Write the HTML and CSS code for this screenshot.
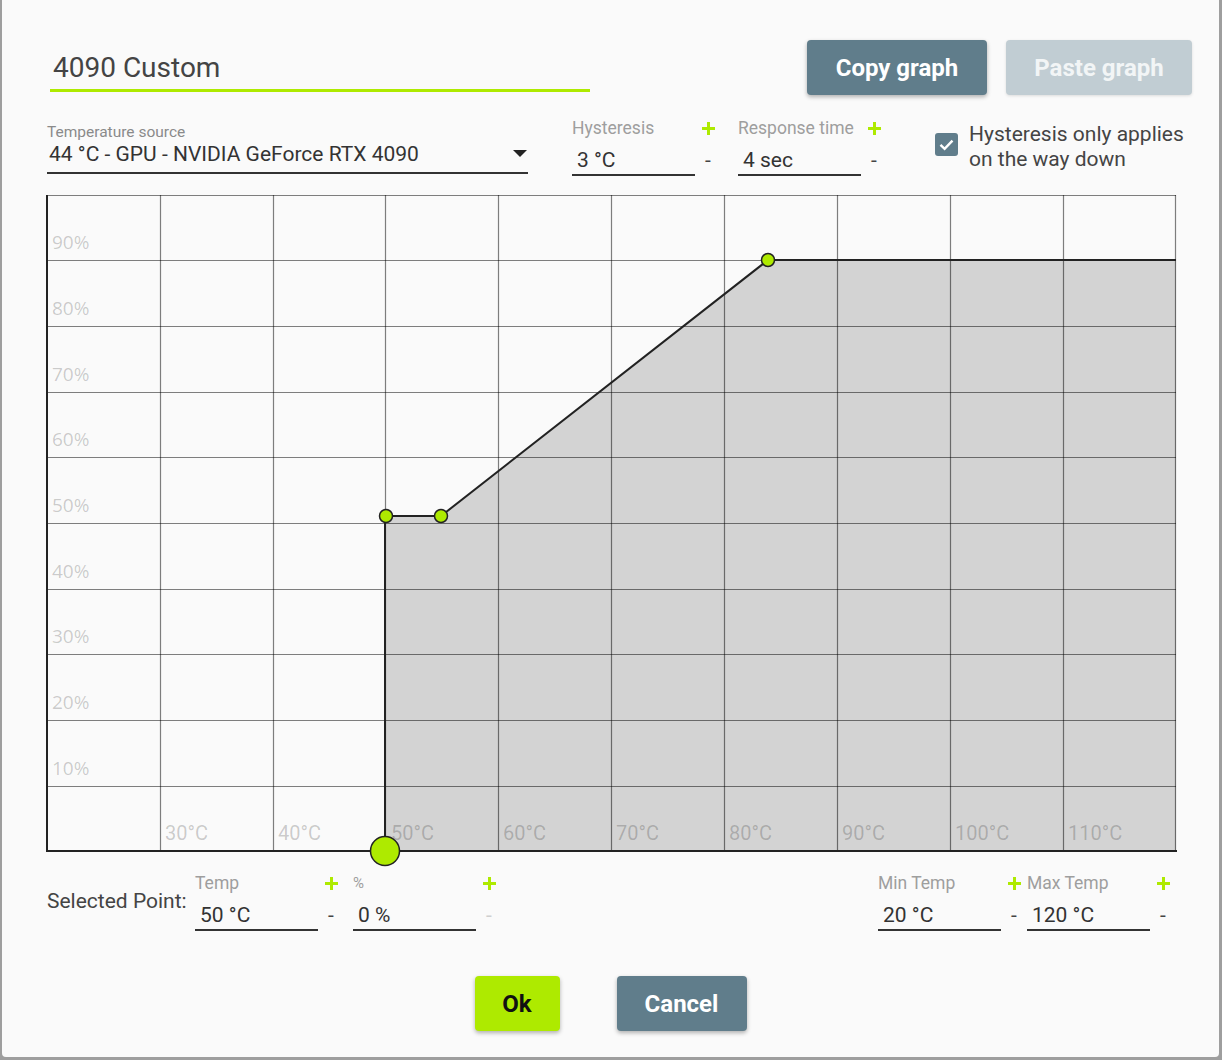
FILE: index.html
```html
<!DOCTYPE html>
<html>

<link rel="stylesheet" href="styles.css">

<head>
    <meta charset="utf-8">
    <title>Fan curve</title>
    <meta name="viewport" content="width=device-width, initial-scale=1">
</head>

<body>
    <div class="dialog">
        <div class="header">
            <div class="title">4090 Custom</div>
            <div class="header-actions">
                <button class="btn btn-slate btn-copy">Copy graph</button>
                <button class="btn btn-disabled btn-paste">Paste graph</button>
            </div>
        </div>

        <div class="settings">
            <div class="select-field">
                <div class="select-label">Temperature source</div>
                <div class="select-value">
                    <span>44 °C - GPU - NVIDIA GeForce RTX 4090</span>
                    <span class="caret"></span>
                </div>
            </div>

            <div class="numfield hysteresis">
                <span class="nf-label">Hysteresis</span>
                <span class="nf-btn"><svg class="plus" viewBox="0 0 13 13"><rect x="5" y="0" width="3" height="13"/><rect x="0" y="5" width="13" height="3"/></svg></span>
                <span class="nf-value">3 °C</span>
                <span class="nf-btn minus">-</span>
            </div>

            <div class="numfield response">
                <span class="nf-label">Response time</span>
                <span class="nf-btn"><svg class="plus" viewBox="0 0 13 13"><rect x="5" y="0" width="3" height="13"/><rect x="0" y="5" width="13" height="3"/></svg></span>
                <span class="nf-value">4 sec</span>
                <span class="nf-btn minus">-</span>
            </div>

            <div class="check">
                <span class="check-box">
                    <svg viewBox="0 0 23 23"><path d="M5.5 11.8 L9.6 15.8 L17.5 7.6" fill="none" stroke="#fff" stroke-width="2.4"/></svg>
                </span>
                <span class="check-text">Hysteresis only applies<br>on the way down</span>
            </div>
        </div>

        <div class="graph">
            <svg class="chart" viewBox="46 195 1131 657" width="1131" height="657">
                <rect x="47" y="195" width="1129" height="656" fill="#fafafa"/>
                <polygon points="385,851 385,516 441,516 768,260 1176,260 1176,851" fill="#d3d3d3"/>
                <g stroke="rgba(0,0,0,0.5)" stroke-width="1.2">
                    <line x1="160.5" y1="195" x2="160.5" y2="851"/>
                    <line x1="273.5" y1="195" x2="273.5" y2="851"/>
                    <line x1="385.5" y1="195" x2="385.5" y2="851"/>
                    <line x1="498.5" y1="195" x2="498.5" y2="851"/>
                    <line x1="611.5" y1="195" x2="611.5" y2="851"/>
                    <line x1="724.5" y1="195" x2="724.5" y2="851"/>
                    <line x1="837.5" y1="195" x2="837.5" y2="851"/>
                    <line x1="950.5" y1="195" x2="950.5" y2="851"/>
                    <line x1="1063.5" y1="195" x2="1063.5" y2="851"/>
                    <line x1="1175.5" y1="195" x2="1175.5" y2="851"/>
                    <line x1="47" y1="195.5" x2="1176" y2="195.5"/>
                    <line x1="47" y1="260.5" x2="1176" y2="260.5"/>
                    <line x1="47" y1="326.5" x2="1176" y2="326.5"/>
                    <line x1="47" y1="392.5" x2="1176" y2="392.5"/>
                    <line x1="47" y1="457.5" x2="1176" y2="457.5"/>
                    <line x1="47" y1="523.5" x2="1176" y2="523.5"/>
                    <line x1="47" y1="589.5" x2="1176" y2="589.5"/>
                    <line x1="47" y1="654.5" x2="1176" y2="654.5"/>
                    <line x1="47" y1="720.5" x2="1176" y2="720.5"/>
                    <line x1="47" y1="786.5" x2="1176" y2="786.5"/>
                </g>
                <g class="pct-labels">
                    <text x="52" y="249">90%</text>
                    <text x="52" y="315">80%</text>
                    <text x="52" y="381">70%</text>
                    <text x="52" y="446">60%</text>
                    <text x="52" y="512">50%</text>
                    <text x="52" y="578">40%</text>
                    <text x="52" y="643">30%</text>
                    <text x="52" y="709">20%</text>
                    <text x="52" y="775">10%</text>
                </g>
                <g class="temp-labels">
                    <text x="165" y="840">30°C</text>
                    <text x="278" y="840">40°C</text>
                    <text x="391" y="840">50°C</text>
                    <text x="503" y="840">60°C</text>
                    <text x="616" y="840">70°C</text>
                    <text x="729" y="840">80°C</text>
                    <text x="842" y="840">90°C</text>
                    <text x="955" y="840">100°C</text>
                    <text x="1068" y="840">110°C</text>
                </g>
                <line x1="47" y1="195" x2="47" y2="852" stroke="#222" stroke-width="2"/>
                <line x1="46" y1="851" x2="1177" y2="851" stroke="#222" stroke-width="2"/>
                <polyline points="385,851 385,516 441,516 768,260 1176,260" fill="none" stroke="#222" stroke-width="2"/>
                <g fill="#aeea00" stroke="#222" stroke-width="1.5">
                    <circle cx="386" cy="516" r="6.5"/>
                    <circle cx="441" cy="516" r="6.5"/>
                    <circle cx="768" cy="260" r="6.5"/>
                    <circle cx="385" cy="851" r="14.5"/>
                </g>
            </svg>
        </div>

        <div class="point-row">
            <div class="point-title">Selected Point:</div>

            <div class="numfield temp">
                <span class="nf-label">Temp</span>
                <span class="nf-btn"><svg class="plus" viewBox="0 0 13 13"><rect x="5" y="0" width="3" height="13"/><rect x="0" y="5" width="13" height="3"/></svg></span>
                <span class="nf-value">50 °C</span>
                <span class="nf-btn minus">-</span>
            </div>

            <div class="numfield percent">
                <span class="nf-label small">%</span>
                <span class="nf-btn"><svg class="plus" viewBox="0 0 13 13"><rect x="5" y="0" width="3" height="13"/><rect x="0" y="5" width="13" height="3"/></svg></span>
                <span class="nf-value">0 %</span>
                <span class="nf-btn minus disabled">-</span>
            </div>

            <div class="numfield min-temp">
                <span class="nf-label">Min Temp</span>
                <span class="nf-btn"><svg class="plus" viewBox="0 0 13 13"><rect x="5" y="0" width="3" height="13"/><rect x="0" y="5" width="13" height="3"/></svg></span>
                <span class="nf-value">20 °C</span>
                <span class="nf-btn minus">-</span>
            </div>

            <div class="numfield max-temp">
                <span class="nf-label">Max Temp</span>
                <span class="nf-btn"><svg class="plus" viewBox="0 0 13 13"><rect x="5" y="0" width="3" height="13"/><rect x="0" y="5" width="13" height="3"/></svg></span>
                <span class="nf-value">120 °C</span>
                <span class="nf-btn minus">-</span>
            </div>
        </div>

        <div class="footer">
            <button class="btn btn-lime btn-ok">Ok</button>
            <button class="btn btn-slate btn-cancel">Cancel</button>
        </div>
    </div>
</body>

</html>
```

FILE: styles.css
```css
* {
    box-sizing: border-box;
    padding: 0;
    margin: 0;
}

body {
    background-color: #9e9e9e;
    font-family: Roboto, "Liberation Sans", sans-serif;
    color: #444;
    overflow: hidden;
}

.dialog {
    width: 1217px;
    height: 1057px;
    margin-left: 2px;
    padding: 40px 27px 0 45px;
    background-color: #fafafa;
    border-radius: 0 0 4px 4px;
}

/* header */

.header {
    display: flex;
    align-items: flex-start;
    height: 55px;
}

.title {
    width: 540px;
    margin-left: 3px;
    padding: 13px 0 6px 3px;
    font-size: 28px;
    line-height: 30px;
    color: #444;
    border-bottom: 3px solid #aeea00;
}

.header-actions {
    margin-left: auto;
    display: flex;
    gap: 19px;
}

.btn {
    height: 55px;
    border: none;
    border-radius: 4px;
    font-family: Roboto, "Liberation Sans", sans-serif;
    font-size: 24px;
    font-weight: 700;
    box-shadow: 0 2px 4px rgba(0, 0, 0, 0.3);
}

.btn-slate {
    background-color: #607d8b;
    color: #fff;
}

.btn-disabled {
    background-color: #c1cdd3;
    color: #f2f5f6;
    box-shadow: 0 1px 3px rgba(0, 0, 0, 0.12);
}

.btn-lime {
    background-color: #aeea00;
    color: #111;
}

.btn-copy {
    width: 180px;
}

.btn-paste {
    width: 186px;
}

.btn-ok {
    width: 85px;
}

.btn-cancel {
    width: 130px;
}

/* settings row */

.settings {
    display: flex;
    align-items: flex-start;
    margin-top: 23px;
}

.select-field {
    width: 481px;
    padding-top: 6px;
}

.select-label {
    font-size: 15.5px;
    line-height: 16px;
    color: #8a8a8a;
}

.select-value {
    display: flex;
    align-items: center;
    justify-content: space-between;
    margin-top: 2px;
    padding: 0 1px 6px 2px;
    font-size: 21px;
    line-height: 24px;
    color: #333;
    border-bottom: 2px solid #333;
}

.caret {
    width: 0;
    height: 0;
    border-left: 7px solid transparent;
    border-right: 7px solid transparent;
    border-top: 7px solid #222;
    margin-top: -2px;
}

.numfield {
    display: grid;
    grid-template-columns: 123px 26px;
    grid-template-rows: 20px 29px;
    row-gap: 9px;
}

.nf-label {
    font-size: 17.5px;
    line-height: 20px;
    color: #9e9e9e;
}

.nf-label.small {
    font-size: 15px;
}

.nf-value {
    padding: 0 0 1px 5px;
    font-size: 21px;
    line-height: 26px;
    color: #333;
    border-bottom: 2px solid #333;
}

.nf-btn {
    display: flex;
    justify-content: center;
    align-items: center;
}

.nf-btn.minus {
    align-items: flex-start;
    font-size: 21px;
    line-height: 26px;
    color: #444;
}

.nf-btn.minus.disabled {
    color: #cfcfcf;
}

.plus {
    width: 13px;
    height: 13px;
    fill: #aeea00;
}

.hysteresis {
    margin-left: 44px;
}

.response {
    margin-left: 17px;
}

.check {
    display: flex;
    align-items: flex-start;
    margin-left: 48px;
}

.check-box {
    width: 23px;
    height: 23px;
    margin-top: 15px;
    border-radius: 3px;
    background-color: #607d8b;
}

.check-box svg {
    display: block;
    width: 23px;
    height: 23px;
}

.check-text {
    margin: 4px 0 0 11px;
    font-size: 21px;
    line-height: 25px;
    color: #444;
}

/* graph */

.graph {
    height: 657px;
    margin-top: 19px;
}

.chart {
    display: block;
    margin-left: -1px;
    overflow: visible;
}

.pct-labels text {
    font-family: "Open Sans", sans-serif;
    font-size: 19px;
    fill: rgba(0, 0, 0, 0.2);
}

.temp-labels text {
    font-family: Roboto, sans-serif;
    font-size: 20px;
    fill: rgba(0, 0, 0, 0.2);
}

/* selected point row */

.point-row {
    display: flex;
    align-items: flex-start;
    width: 1129px;
    margin-top: 21px;
}

.point-title {
    width: 148px;
    margin-top: 15px;
    font-size: 21px;
    line-height: 26px;
    color: #444;
}

.percent {
    margin-left: 9px;
}

.min-temp {
    margin-left: auto;
}

/* footer */

.footer {
    display: flex;
    justify-content: center;
    gap: 57px;
    width: 1127px;
    margin-top: 45px;
}
```
